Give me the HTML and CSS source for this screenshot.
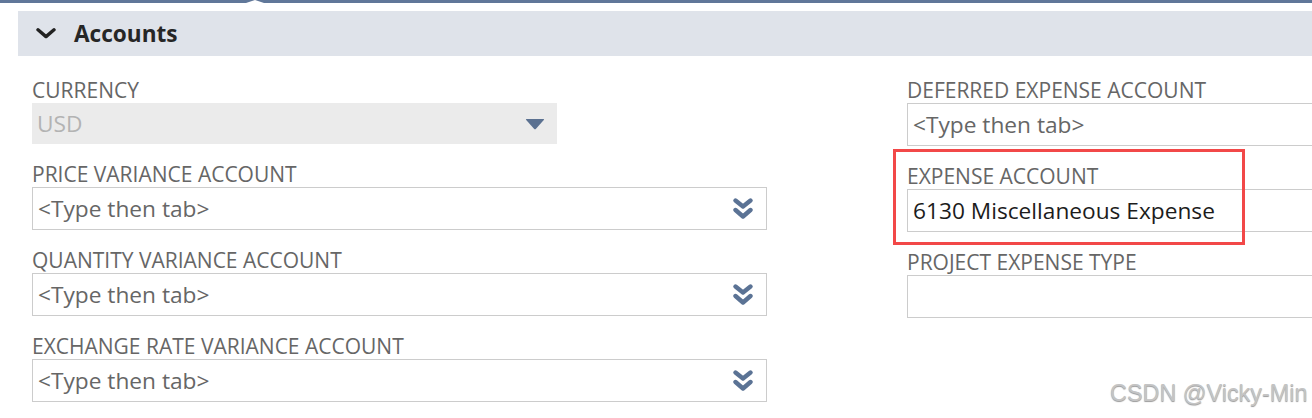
FILE: index.html
```html
<!DOCTYPE html>
<html>
<head>
<meta charset="utf-8">
<link rel="stylesheet" href="styles.css">
</head>
<body>
<div class="page">
  <div class="topbar"><span class="notch"></span></div>
  <div class="section-head">
    <svg class="chev" width="20" height="11" viewBox="0 0 20 11"><path d="M2 1.8 L10 8.6 L18 1.8" fill="none" stroke="#222" stroke-width="3.4" stroke-linecap="round" stroke-linejoin="round"/></svg>
    <span class="section-title">Accounts</span>
  </div>
  <div class="form">
    <div class="col">
      <div class="field">
        <div class="label">CURRENCY</div>
        <div class="select disabled">
          <span class="val muted">USD</span>
          <svg class="tri" width="20" height="12" viewBox="0 0 20 12"><path d="M1.5 1 H18.5 Q19.6 1 18.8 2 L11 10.8 Q10 11.8 9 10.8 L1.2 2 Q0.4 1 1.5 1 Z" fill="#5b7191"/></svg>
        </div>
      </div>
      <div class="field">
        <div class="label">PRICE VARIANCE ACCOUNT</div>
        <div class="input"><span class="val ph">&lt;Type then tab&gt;</span><svg class="dbl" width="20" height="22" viewBox="0 0 20 22"><path d="M2.5 2.5 L10 8.5 L17.5 2.5" fill="none" stroke="#5b7395" stroke-width="4.4" stroke-linejoin="round" stroke-linecap="round"/><path d="M2.5 12 L10 18.5 L17.5 12" fill="none" stroke="#5b7395" stroke-width="4.4" stroke-linejoin="round" stroke-linecap="round"/></svg></div>
      </div>
      <div class="field">
        <div class="label">QUANTITY VARIANCE ACCOUNT</div>
        <div class="input"><span class="val ph">&lt;Type then tab&gt;</span><svg class="dbl" width="20" height="22" viewBox="0 0 20 22"><path d="M2.5 2.5 L10 8.5 L17.5 2.5" fill="none" stroke="#5b7395" stroke-width="4.4" stroke-linejoin="round" stroke-linecap="round"/><path d="M2.5 12 L10 18.5 L17.5 12" fill="none" stroke="#5b7395" stroke-width="4.4" stroke-linejoin="round" stroke-linecap="round"/></svg></div>
      </div>
      <div class="field">
        <div class="label">EXCHANGE RATE VARIANCE ACCOUNT</div>
        <div class="input"><span class="val ph">&lt;Type then tab&gt;</span><svg class="dbl" width="20" height="22" viewBox="0 0 20 22"><path d="M2.5 2.5 L10 8.5 L17.5 2.5" fill="none" stroke="#5b7395" stroke-width="4.4" stroke-linejoin="round" stroke-linecap="round"/><path d="M2.5 12 L10 18.5 L17.5 12" fill="none" stroke="#5b7395" stroke-width="4.4" stroke-linejoin="round" stroke-linecap="round"/></svg></div>
      </div>
    </div>
    <div class="col">
      <div class="field">
        <div class="label">DEFERRED EXPENSE ACCOUNT</div>
        <div class="input wide"><span class="val ph">&lt;Type then tab&gt;</span></div>
      </div>
      <div class="field highlighted">
        <div class="label">EXPENSE ACCOUNT</div>
        <div class="input wide"><span class="val dark">6130 Miscellaneous Expense</span></div>
        <div class="redbox"></div>
      </div>
      <div class="field">
        <div class="label">PROJECT EXPENSE TYPE</div>
        <div class="input wide"></div>
      </div>
    </div>
  </div>
  <div class="watermark">CSDN @Vicky-Min</div>
</div>
</body>
</html>
```
FILE: styles.css
```css
html, body {
  margin: 0;
  padding: 0;
  background: #fff;
  overflow: hidden;
}
.page {
  position: relative;
  width: 1312px;
  height: 418px;
  overflow: hidden;
  font-family: "Open Sans", "Noto Sans", sans-serif;
}
.topbar {
  position: relative;
  height: 3px;
  background: #607799;
}
.notch {
  position: absolute;
  left: 243px;
  top: 0;
  width: 0;
  height: 0;
  border-left: 12px solid transparent;
  border-right: 12px solid transparent;
  border-bottom: 4px solid #fff;
}
.section-head {
  margin: 8px 0 0 18px;
  height: 45px;
  background: #dfe3ea;
  display: flex;
  align-items: center;
  padding-left: 18px;
  width: 1400px;
}
.chev {
  display: block;
}
.section-title {
  margin-left: 18px;
  font-size: 22.6px;
  font-weight: 700;
  color: #262626;
  line-height: 30px;
}
.form {
  display: flex;
  gap: 140px;
  padding: 21px 0 0 32px;
}
.col {
  width: 735px;
  flex: none;
  display: flex;
  flex-direction: column;
}
.field {
  position: relative;
  margin-bottom: 17px;
}
.label {
  font-size: 21px;
  line-height: 26px;
  height: 26px;
  color: #666;
  white-space: nowrap;
}
.input, .select {
  box-sizing: border-box;
  height: 43px;
  border: 1px solid #ccc;
  display: flex;
  align-items: center;
  padding: 0 13px 0 5px;
  background: #fff;
}
.select.disabled {
  width: 525px;
  height: 41px;
  border: none;
  background: #ebebeb;
  padding: 0 12px 0 5px;
}
.val {
  flex: 1;
  font-size: 22.7px;
  line-height: 30px;
  white-space: nowrap;
}
.ph { color: #666; }
.muted { color: #b3b3b3; }
.dark { color: #1c1c1c; }
.tri { display: block; margin-top: 1px; }
.dbl { display: block; margin-top: 1px; }
.redbox {
  position: absolute;
  left: -14px;
  top: -14px;
  width: 352px;
  height: 96px;
  box-sizing: border-box;
  border: 3px solid #f24848;
  pointer-events: none;
}
.watermark {
  position: absolute;
  left: 1110px;
  top: 380px;
  font-family: "Liberation Sans", Arial, sans-serif;
  font-size: 23.4px;
  color: #c4c4c4;
  text-shadow: 0 1px 1px #9a9a9a;
  white-space: nowrap;
}
```
